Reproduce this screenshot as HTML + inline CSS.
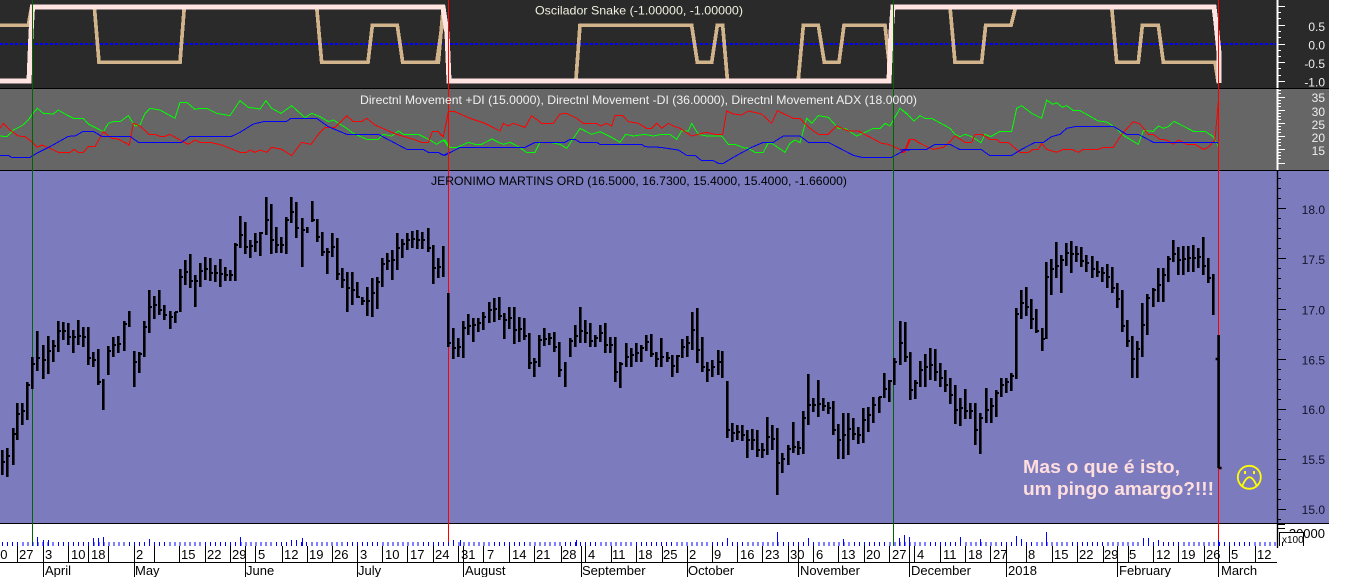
<!DOCTYPE html>
<html><head><meta charset="utf-8"><style>
html,body{margin:0;padding:0;background:#fff;width:1352px;height:577px;overflow:hidden}
svg{display:block;font-family:"Liberation Sans",sans-serif;font-size:12px}
</style></head><body>
<svg width="1352" height="577" viewBox="0 0 1352 577" xmlns="http://www.w3.org/2000/svg">
<rect width="1352" height="577" fill="#fff"/>
<rect x="0" y="0" width="1329" height="88" fill="#2a2a2a"/>
<rect x="0" y="89" width="1329" height="81" fill="#666"/>
<rect x="0" y="171" width="1329" height="352" fill="#7b7bbd"/>
<path d="M0 88.5H1329M0 170.5H1329M0 523.5H1329" stroke="#000" fill="none"/>
<path d="M0 44H1277" stroke="#0000ff" stroke-width="2" stroke-dasharray="3 2" fill="none" shape-rendering="crispEdges"/>
<g fill="none" stroke-linejoin="miter" shape-rendering="crispEdges">
<g stroke="#d2b48c" stroke-width="11">
<polyline transform="scale(.33333)" points="0,76 85,76 95,20"/>
<polyline transform="scale(.33333)" points="283,20 297,187 540,187 553,20"/>
<polyline transform="scale(.33333)" points="950,20 965,187 1104,187 1117,76 1192,76 1208,187 1315,187 1330,20"/>
<polyline transform="translate(440 0) scale(.33333)" points="-10,190 10,50"/>
<polyline transform="translate(440 0) scale(.33333)" points="408,237 420,76 755,76 772,187 815,187 832,76 848,76 862,237"/>
<polyline transform="translate(440 0) scale(.33333)" points="1075,237 1090,76 1135,76 1153,187 1197,187 1212,76 1335,76 1347,187"/>
<polyline transform="translate(900 0) scale(.33333)" points="150,20 165,187 245,187 257,76 333,76 347,20"/>
<polyline transform="translate(900 0) scale(.33333)" points="635,20 650,187 715,187 727,76 775,76 790,187 945,187 955,250"/>
</g>
<polyline stroke="#ffe4e1" stroke-width="5" points="0,81 29,81 31,33 32.5,7 443,7 447,33 449,81 889,81 891,33 893,7 1214,7 1216,23 1219,53 1219,83"/>
</g>
<g fill="none" stroke-width="3" shape-rendering="crispEdges">
<polyline stroke="#00ff00" transform="scale(.33333)" points="0,408 20,410 40,390 65,378 85,360 95,345 112,325 130,340 160,342 175,330 200,345 220,355 250,355 265,372 285,382 310,395 325,370 340,365 360,365 385,347 405,378 420,375 435,340 450,325 480,330 525,355 540,307 560,307 585,328 600,325 620,325 650,340 690,347 720,302 745,322 780,327 798,302 815,325 843,340 875,317 915,353 935,340 960,350 985,365 1000,360 1040,385 1060,400 1100,418 1135,418 1150,403 1175,408 1195,393 1210,403 1255,403 1290,420 1310,433 1330,420 1345,440"/>
<polyline stroke="#00ff00" transform="translate(440 0) scale(.33333)" points="0,425 15,420 30,443 50,443 85,427 105,433 125,433 155,417 175,427 190,433 210,427 235,440 260,457 285,457 300,427 330,427 360,433 380,445 420,385 455,403 480,395 520,415 540,427 557,403 580,408 615,403 640,408 665,403 690,403 710,418 725,393 745,393 755,370 775,403 800,408 820,408 845,408 865,433 885,433 910,443 925,445 945,457 970,457 985,428 1000,433 1035,457 1050,430 1065,420 1080,428 1100,355 1115,370 1135,347 1165,352 1195,385 1215,385 1250,408 1280,395 1300,385 1320,385 1335,370 1350,378 1380,325 1410,350"/>
<polyline stroke="#00ff00" transform="translate(900 0) scale(.33333)" points="0,325 20,340 42,363 60,347 75,355 95,355 150,385 165,403 180,410 195,403 215,410 243,428 255,403 272,410 300,394 335,394 350,325 365,317 395,340 425,355 440,300 458,313 470,308 487,322 500,317 520,332 540,332 595,363 620,366 650,385 665,403 715,433 730,392 760,394 775,378 790,385 805,380 822,364 880,394 915,394 940,410 955,440"/>
<polyline stroke="#ff0000" transform="scale(.33333)" points="0,385 10,370 30,390 55,408 75,410 95,425 112,442 125,435 150,445 175,457 210,457 222,448 235,457 250,457 265,440 285,440 310,395 335,415 355,417 388,435 400,370 420,378 447,403 465,403 480,409 495,409 510,403 540,420 565,433 585,420 600,427 630,427 665,435 720,457 740,457 750,450 765,457 780,450 800,457 815,442 845,448 875,467 905,427 933,433 955,403 975,382 1005,382 1040,347 1060,365 1085,365 1100,355 1125,375 1175,397 1190,403 1240,418 1265,427 1285,427 1297,395 1315,395 1330,410 1345,340"/>
<polyline stroke="#ff0000" transform="translate(440 0) scale(.33333)" points="0,403 10,410 25,335 45,335 90,355 135,370 180,393 190,370 205,378 220,370 255,382 275,347 305,370 340,370 360,342 380,340 410,355 430,370 470,370 482,378 500,370 515,378 525,347 548,347 565,365 595,370 620,385 635,385 650,370 665,385 685,370 700,378 720,385 755,408 775,403 800,397 825,403 848,403 860,333 880,342 905,345 925,333 965,342 995,370 1012,332 1060,355 1080,355 1110,385 1135,403 1165,403 1190,378 1225,393 1255,393 1325,430 1345,433 1395,455 1410,420"/>
<polyline stroke="#ff0000" transform="translate(900 0) scale(.33333)" points="0,457 12,457 28,418 42,418 60,430 85,442 100,448 130,442 145,430 165,408 195,427 215,427 225,403 245,403 270,418 290,418 300,427 325,427 360,457 385,457 400,448 415,448 425,430 440,448 470,457 490,448 515,448 535,457 550,448 570,448 595,448 610,442 640,442 665,403 700,365 720,372 745,403 760,403 780,418 800,420 820,433 835,420 860,433 885,433 910,448 925,442 945,420 955,305"/>
<polyline stroke="#0000ff" transform="scale(.33333)" points="0,466 25,466 35,472 90,472 110,460 150,440 205,409 225,408 250,394 280,394 305,409 390,409 415,427 545,427 570,409 695,409 720,397 760,372 795,364 860,364 873,355 950,355 985,380 1040,403 1135,403 1220,448 1270,448 1285,457 1315,457 1330,466 1348,457"/>
<polyline stroke="#0000ff" transform="translate(440 0) scale(.33333)" points="0,462 15,466 60,442 255,442 285,427 375,427 390,418 405,418 420,427 470,427 480,433 605,433 615,440 660,442 715,450 740,466 765,466 785,482 820,482 835,490 850,490 880,472 935,442 970,427 1000,427 1030,408 1080,408 1105,427 1165,427 1240,466 1265,472 1355,472 1395,450 1410,450"/>
<polyline stroke="#0000ff" transform="translate(900 0) scale(.33333)" points="0,450 15,448 80,448 105,433 150,433 178,448 243,448 268,466 335,466 365,448 405,427 430,427 455,410 480,403 500,385 530,379 640,379 680,403 715,403 760,427 950,427 955,430"/>
</g>
<path d="M32.5 0V546M893.5 0V546" stroke="#006400" fill="none"/>
<path d="M448.5 0V546M1218.5 0V546" stroke="#ff0000" fill="none"/>
<path fill="none" stroke="#000" stroke-width="2.6" d="M2.3 450V475M7.3 448V477M13.3 428V465M17.3 403V440M22.3 403V425M27.3 382V420M32.3 357V389M37.3 331V371M43.3 345V379M48.3 336V374M53.3 340V362M58.3 321V352M63.3 322V340M68.3 323V345M73.3 330V353M78.3 320V345M83.3 327V347M88.3 327V365M93.3 352V367M98.3 349V385M103.3 379V410M108.3 346V375M113.3 337V357M118.3 336V353M124.3 321V351M129.3 311V327M134.3 351V387M139.3 352V373M144.3 321V357M149.3 290V333M154.3 296V319M159.3 290V315M164.3 305V320M170.3 311V329M175.3 312V323M180.3 269V312M185.3 260V285M190.3 254V288M195.3 275V307M200.3 263V287M205.3 257V280M210.3 258V281M215.3 265V282M220.3 259V287M225.3 267V281M230.3 270V281M235.3 243V281M240.3 216V248M245.3 222V254M250.3 240V258M255.3 233V252M260.3 232V256M266.3 197V235M271.3 204V254M276.3 227V253M281.3 237V253M286.3 217V254M291.3 197V223M296.3 202V238M302.3 218V267M307.3 227V233M312.3 201V222M317.3 219V242M322.3 232V256M327.3 248V274M332.3 233V257M337.3 238V280M342.3 268V288M347.3 272V312M352.3 272V305M357.3 282V298M362.3 297V305M367.3 287V316M372.3 278V317M377.3 277V309M382.3 258V287M387.3 253V270M392.3 250V280M397.3 233V270M402.3 239V258M407.3 233V250M412.3 231V248M417.3 230V249M422.3 232V249M428.3 228V252M433.3 245V284M438.3 258V278M443.3 246V277M448.3 293V347M453.3 328V359M458.3 338V357M463.3 321V358M468.3 314V335M473.3 318V342M478.3 318V332M483.3 312V330M489.3 302V323M494.3 298V322M499.3 297V320M504.3 313V339M509.3 307V329M514.3 307V344M519.3 317V342M524.3 318V340M529.3 333V369M534.3 358V377M539.3 335V367M544.3 328V346M549.3 333V345M554.3 332V352M559.3 342V377M565.3 362V387M570.3 338V357M575.3 325V347M580.3 307V343M585.3 320V343M590.3 323V347M595.3 335V347M600.3 325V342M605.3 323V353M610.3 337V353M615.3 337V382M620.3 362V388M626.3 343V367M631.3 348V367M636.3 343V362M641.3 345V362M646.3 335V351M651.3 334V357M656.3 352V367M661.3 338V367M667.3 352V362M672.3 355V377M677.3 355V373M682.3 339V358M687.3 336V357M692.3 312V350M697.3 308V363M702.3 337V372M707.3 362V382M712.3 360V377M718.3 350V375M722.3 351V378M727.3 381V438M732.3 423V442M737.3 425V440M742.3 425V441M747.3 430V458M752.3 429V450M757.3 430V457M762.3 443V458M767.3 417V455M772.3 425V450M777.3 428V495M782.3 453V473M788.3 445V465M793.3 422V453M798.3 441V455M803.3 411V454M808.3 374V425M813.3 398V412M818.3 380V417M823.3 398V411M828.3 402V414M833.3 401V435M838.3 424V459M843.3 413V459M848.3 413V455M853.3 418V440M858.3 427V444M863.3 408V443M868.3 407V432M873.3 397V423M879.3 397V413M884.3 373V398M889.3 380V402M894.3 358V385M900.3 321V365M905.3 322V362M910.3 352V400M915.3 380V399M920.3 361V387M925.3 354V387M930.3 348V380M935.3 349V381M940.3 363V387M945.3 370V392M950.3 378V404M955.3 385V424M960.3 398V426M965.3 389V419M970.3 403V419M975.3 403V445M980.3 413V454M986.3 388V423M991.3 398V423M996.3 390V417M1001.3 378V397M1006.3 378V393M1011.3 373V391M1016.3 308V379M1021.3 290V319M1026.3 287V316M1031.3 299V329M1036.3 309V333M1042.3 328V351M1046.3 262V339M1051.3 259V295M1056.3 242V278M1061.3 255V293M1066.3 243V266M1071.3 241V273M1076.3 246V262M1081.3 247V267M1086.3 255V272M1092.3 256V278M1097.3 261V277M1102.3 267V282M1107.3 264V288M1112.3 267V293M1117.3 283V308M1122.3 290V332M1127.3 320V347M1132.3 336V378M1137.3 341V378M1142.3 303V357M1147.3 294V335M1153.3 288V307M1158.3 268V302M1163.3 268V302M1168.3 256V282M1173.3 240V262M1178.3 247V275M1183.3 246V275M1188.3 246V272M1193.3 245V272M1198.3 248V268M1203.3 237V275M1208.3 258V283M1213.3 274V315M1218.6 335V468M1218.6 359h-3M1218.6 468h3"/>
<path shape-rendering="crispEdges" fill="none" stroke="#000" stroke-width="2" d="M2 462h3M7 456h3M13 434h3M17 414h3M22 411h3M27 385h3M32 364h3M37 358h3M43 360h3M48 351h3M53 346h3M58 331h3M63 331h3M68 337h3M73 337h3M78 336h3M83 337h3M88 358h3M93 360h3M98 382h3M108 351h3M113 345h3M118 344h3M124 324h3M134 362h3M139 354h3M144 327h3M149 307h3M154 305h3M159 310h3M164 315h3M170 317h3M175 312h3M180 277h3M185 272h3M190 281h3M195 281h3M200 271h3M205 269h3M210 273h3M215 273h3M220 274h3M225 275h3M230 275h3M235 245h3M240 235h3M245 247h3M250 246h3M255 242h3M260 233h3M266 220h3M271 240h3M276 245h3M281 245h3M286 220h3M291 212h3M296 228h3M302 230h3M312 220h3M317 237h3M322 252h3M327 252h3M332 247h3M337 274h3M342 280h3M347 288h3M352 290h3M357 297h3M362 301h3M367 301h3M372 293h3M377 282h3M382 264h3M387 261h3M392 260h3M397 248h3M402 244h3M407 240h3M412 239h3M417 240h3M422 240h3M428 248h3M433 268h3M438 267h3M448 343h3M453 348h3M458 347h3M463 328h3M468 326h3M473 325h3M478 323h3M483 317h3M489 310h3M494 309h3M499 316h3M504 320h3M509 318h3M514 330h3M519 329h3M524 336h3M529 363h3M534 362h3M539 340h3M544 339h3M549 338h3M554 347h3M559 370h3M570 341h3M575 336h3M580 331h3M585 333h3M590 341h3M595 338h3M600 333h3M605 345h3M610 345h3M615 372h3M620 364h3M626 357h3M631 355h3M636 353h3M641 348h3M646 342h3M651 354h3M656 359h3M661 357h3M667 358h3M672 366h3M677 356h3M682 347h3M687 343h3M692 330h3M697 350h3M702 367h3M707 370h3M712 367h3M718 362h3M727 430h3M732 433h3M737 432h3M742 435h3M747 440h3M752 440h3M757 450h3M762 450h3M767 437h3M772 439h3M777 463h3M782 459h3M788 449h3M793 447h3M798 448h3M803 418h3M808 405h3M813 405h3M818 404h3M823 406h3M828 408h3M833 430h3M838 440h3M843 435h3M848 429h3M853 434h3M858 435h3M863 420h3M868 415h3M873 405h3M879 397h3M884 389h3M889 381h3M894 362h3M900 343h3M905 357h3M910 390h3M915 383h3M920 370h3M925 367h3M930 365h3M935 372h3M940 378h3M945 385h3M950 395h3M955 410h3M960 408h3M965 411h3M970 411h3M975 430h3M980 418h3M986 410h3M991 406h3M996 393h3M1001 385h3M1006 382h3M1011 376h3M1016 314h3M1021 303h3M1026 307h3M1031 319h3M1036 331h3M1042 339h3M1046 277h3M1051 269h3M1056 266h3M1061 260h3M1066 253h3M1071 254h3M1076 254h3M1081 261h3M1086 263h3M1092 269h3M1097 272h3M1102 273h3M1107 277h3M1112 288h3M1117 299h3M1122 326h3M1127 341h3M1132 359h3M1137 349h3M1142 325h3M1147 298h3M1153 290h3M1158 285h3M1163 275h3M1168 259h3M1173 254h3M1178 260h3M1183 259h3M1188 258h3M1193 258h3M1198 257h3M1203 266h3M1208 278h3"/>
<path d="M1277.5 0V88" stroke="#fff" stroke-width="2" fill="none"/>
<path d="M1277.5 89V170" stroke="#fff" stroke-width="2" fill="none"/>
<path d="M1277 6.5h8M1277 12.5h4M1277 18.5h4M1277 25.5h8M1277 31.5h4M1277 37.5h4M1277 44.5h8M1277 50.5h4M1277 56.5h4M1277 62.5h8M1277 68.5h4M1277 75.5h4M1277 81.5h8" stroke="#fff" fill="none"/>
<path d="M1277 90.5h4M1277 93.5h4M1277 97.5h8M1277 100.5h4M1277 103.5h4M1277 106.5h4M1277 110.5h8M1277 113.5h4M1277 116.5h4M1277 119.5h4M1277 123.5h8M1277 126.5h4M1277 129.5h4M1277 132.5h4M1277 136.5h8M1277 139.5h4M1277 142.5h4M1277 145.5h4M1277 149.5h8M1277 152.5h4M1277 155.5h4M1277 158.5h4M1277 163.5h8" stroke="#fff" fill="none"/>
<path d="M1277.5 171V548" stroke="#000" stroke-width="1.4" fill="none"/>
<path d="M1277 178.5h4M1277 188.5h4M1277 198.5h4M1277 208.5h9M1277 218.5h4M1277 228.5h4M1277 238.5h4M1277 248.5h4M1277 258.5h9M1277 268.5h4M1277 278.5h4M1277 288.5h4M1277 298.5h4M1277 309.5h9M1277 319.5h4M1277 329.5h4M1277 339.5h4M1277 349.5h4M1277 359.5h9M1277 369.5h4M1277 379.5h4M1277 389.5h4M1277 399.5h4M1277 409.5h9M1277 419.5h4M1277 429.5h4M1277 439.5h4M1277 449.5h4M1277 459.5h9M1277 469.5h4M1277 479.5h4M1277 489.5h4M1277 499.5h4M1277 509.5h9M1277 519.5h4M1277 524.5h8M1277 528.5h8" stroke="#000" fill="none"/>
<text x="1325" y="31" text-anchor="end" fill="#eee">0.5</text>
<text x="1325" y="49.5" text-anchor="end" fill="#eee">0.0</text>
<text x="1325" y="68" text-anchor="end" fill="#eee">-0.5</text>
<text x="1325" y="86.5" text-anchor="end" fill="#eee">-1.0</text>
<text x="1325" y="102" text-anchor="end" fill="#eee">35</text>
<text x="1325" y="116" text-anchor="end" fill="#eee">30</text>
<text x="1325" y="129" text-anchor="end" fill="#eee">25</text>
<text x="1325" y="142" text-anchor="end" fill="#eee">20</text>
<text x="1325" y="155" text-anchor="end" fill="#eee">15</text>
<g fill="#14142a">
<text x="1325" y="214" text-anchor="end">18.0</text>
<text x="1325" y="264" text-anchor="end">17.5</text>
<text x="1325" y="314.5" text-anchor="end">17.0</text>
<text x="1325" y="364.5" text-anchor="end">16.5</text>
<text x="1325" y="414" text-anchor="end">16.0</text>
<text x="1325" y="464" text-anchor="end">15.5</text>
<text x="1325" y="514" text-anchor="end">15.0</text>
</g>
<text x="535" y="14.5" fill="#f0f0e0" textLength="208" lengthAdjust="spacingAndGlyphs">Oscilador Snake (-1.00000, -1.00000)</text>
<text x="360" y="104" fill="#f0f0f0" textLength="557" lengthAdjust="spacingAndGlyphs">Directnl Movement +DI (15.0000), Directnl Movement -DI (36.0000), Directnl Movement ADX (18.0000)</text>
<text x="431" y="185" fill="#000" textLength="416" lengthAdjust="spacingAndGlyphs">JERONIMO MARTINS ORD (16.5000, 16.7300, 15.4000, 15.4000, -1.66000)</text>
<g font-weight="bold" font-size="18" fill="#ffdede">
<text x="1023" y="473" textLength="157" lengthAdjust="spacingAndGlyphs">Mas o que é isto,</text>
<text x="1023" y="495" textLength="191" lengthAdjust="spacingAndGlyphs">um pingo amargo?!!!</text>
</g>
<g fill="none" stroke="#ffff00" stroke-width="1.8">
<circle cx="1249.3" cy="477.3" r="11.5"/>
<path d="M1242.5 485.5Q1249.5 469 1256.5 485.5"/>
</g>
<path d="M1244 471h2v3h-2zM1253 471h2v3h-2z" fill="#ffff00"/>
<path d="M2 544H1277" stroke="#0000ff" stroke-width="4" stroke-dasharray="1 4.07" fill="none" shape-rendering="crispEdges"/>
<path shape-rendering="crispEdges" d="M37.5 546V537M43.5 546V540M48.5 546V540M93.5 546V538M98.5 546V538M103.5 546V537M149.5 546V539M240.5 546V537M291.5 546V540M296.5 546V540M302.5 546V538M453.5 546V540M460.5 546V540M576.5 546V540M727.5 546V538M777.5 546V532M808.5 546V538M843.5 546V539M899.5 546V538M904.5 546V535M909.5 546V537M960.5 546V537M980.5 546V539M1016.5 546V536M1021.5 546V539M1046.5 546V532M1143.5 546V538M1148.5 546V538M1158.5 546V540M1218.5 546V540" stroke="#0000ff" fill="none"/>
<path d="M0 562.5H1277" stroke="#000" fill="none"/>
<path d="M17.5 546V562M43.5 546V577M68.5 546V562M88.5 546V562M108.5 546V562M134.5 546V577M154.5 546V562M179.5 546V562M205.5 546V562M230.5 546V562M245.5 546V577M255.5 546V562M282.5 546V562M307.5 546V562M332.5 546V562M357.5 546V577M382.5 546V562M407.5 546V562M433.5 546V562M458.5 546V562M463.5 546V577M483.5 546V562M509.5 546V562M534.5 546V562M561.5 546V562M581.5 546V577M585.5 546V562M611.5 546V562M636.5 546V562M662.5 546V562M687.5 546V577M712.5 546V562M737.5 546V562M762.5 546V562M788.5 546V562M798.5 546V577M813.5 546V562M838.5 546V562M864.5 546V562M889.5 546V562M909.5 546V577M914.5 546V562M940.5 546V562M965.5 546V562M990.5 546V562M1006.5 546V577M1026.5 546V562M1052.5 546V562M1077.5 546V562M1103.5 546V562M1117.5 546V577M1128.5 546V562M1153.5 546V562M1178.5 546V562M1204.5 546V562M1218.5 546V577M1229.5 546V562M1255.5 546V562" stroke="#000" fill="none"/>
<g fill="#000" font-size="13">
<text x="-7" y="559">20</text><text x="19" y="559">27</text><text x="45" y="559">3</text><text x="71" y="559">10</text><text x="91" y="559">18</text><text x="136" y="559">2</text><text x="181" y="559">15</text><text x="207" y="559">22</text><text x="232" y="559">29</text><text x="258" y="559">5</text><text x="284" y="559">12</text><text x="309" y="559">19</text><text x="334" y="559">26</text><text x="360" y="559">3</text><text x="385" y="559">10</text><text x="410" y="559">17</text><text x="435" y="559">24</text><text x="461" y="559">31</text><text x="487" y="559">7</text><text x="512" y="559">14</text><text x="536" y="559">21</text><text x="562" y="559">28</text><text x="588" y="559">4</text><text x="612" y="559">11</text><text x="638" y="559">18</text><text x="663" y="559">25</text><text x="689" y="559">2</text><text x="714" y="559">9</text><text x="740" y="559">16</text><text x="765" y="559">23</text><text x="790" y="559">30</text><text x="816" y="559">6</text><text x="841" y="559">13</text><text x="866" y="559">20</text><text x="892" y="559">27</text><text x="917" y="559">4</text><text x="943" y="559">11</text><text x="968" y="559">18</text><text x="993" y="559">27</text><text x="1028" y="559">8</text><text x="1054" y="559">15</text><text x="1079" y="559">22</text><text x="1104" y="559">29</text><text x="1129" y="559">5</text><text x="1156" y="559">12</text><text x="1181" y="559">19</text><text x="1206" y="559">26</text><text x="1231" y="559">5</text><text x="1257" y="559">12</text>
<text x="45" y="575">April</text><text x="135" y="575">May</text><text x="246" y="575">June</text><text x="358" y="575">July</text><text x="465" y="575">August</text><text x="582" y="575">September</text><text x="688" y="575">October</text><text x="800" y="575">November</text><text x="911" y="575">December</text><text x="1008" y="575">2018</text><text x="1119" y="575">February</text><text x="1221" y="575">March</text>
</g>
<text x="1325" y="538" text-anchor="end" font-size="13" fill="#000">20000</text>
<rect x="1280" y="533" width="24" height="12" fill="#fff"/>
<path d="M1279.5 532V546M1303.5 533V546M1279 532.5H1304M1282.5 542V546" stroke="#000" fill="none"/>
<text x="1282" y="543" font-size="10" fill="#000">x100</text>
</svg>
</body></html>
